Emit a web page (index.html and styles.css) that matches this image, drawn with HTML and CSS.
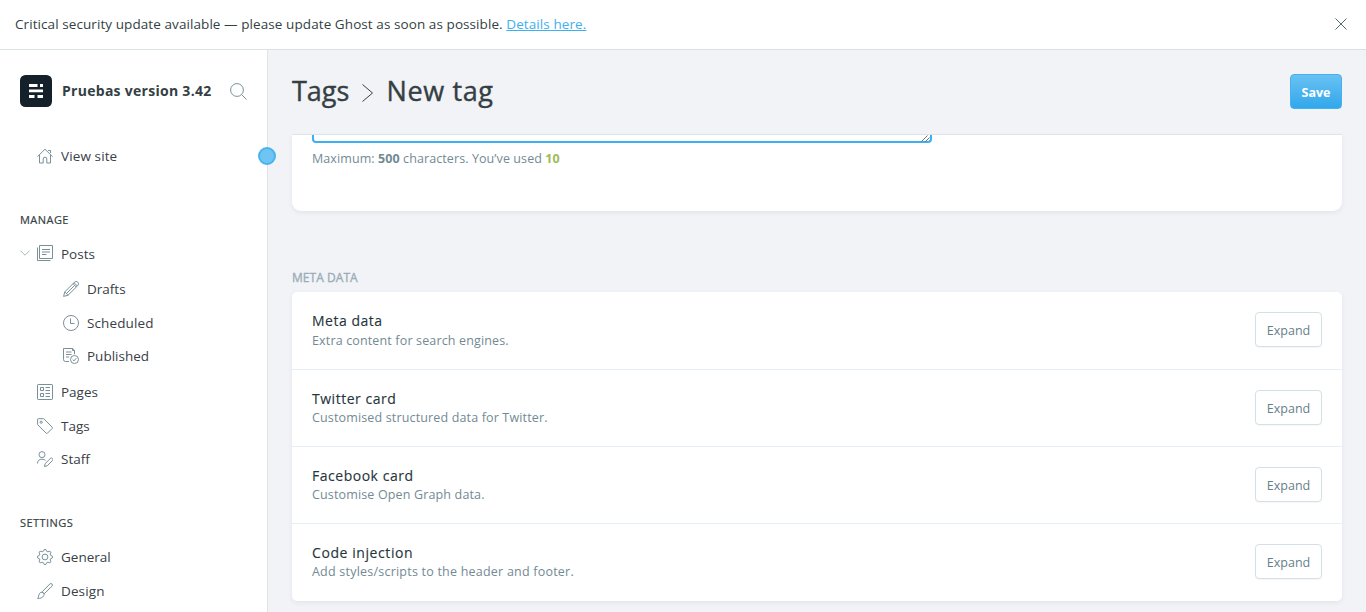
FILE: index.html
```html
<!DOCTYPE html>
<html lang="en">
<head>
<meta charset="utf-8">
<title>New tag</title>
<link rel="stylesheet" href="styles.css">
</head>
<body>
<div class="alert">
  <p class="alert-text">Critical security update available — please update Ghost as soon as possible. <a href="#">Details here.</a></p>
  <svg class="close" viewBox="0 0 12 12"><path d="M.5.5l11 11M11.500.500l-11 11"/></svg>
</div>
<div class="app">
  <nav class="sidebar">
    <div class="site">
      <svg class="logo" viewBox="0 0 32 32"><rect width="32" height="32" rx="5.500" fill="#15212a"/><path fill="#fff" d="M9 9h8.500v3H9zM20 9h3v3h-3zM9 14.500h14v2.800H9zM9 20h5.500v3H9zM17.500 20H23v3h-5.500z"/></svg>
      <span class="site-name">Pruebas version 3.42</span>
      <svg class="icon search" viewBox="0 0 17 17"><circle cx="7" cy="7" r="6.400"/><path d="M11.600 11.600l4.900 4.900"/></svg>
    </div>
    <a class="item view"><svg class="icon" viewBox="0 0 16 16"><path d="M.5 8.600L8 1.200l7.500 7.400M2.500 7v8h3.700v-4a1.800 1.800 0 0 1 3.600 0v4h3.700V7M11.200 2.500h2.300v2.600"/></svg><span class="wide">View site</span></a>
    <h2 class="head manage">Manage</h2>
    <a class="item posts"><svg class="chev" viewBox="0 0 10 6"><path d="M.5.700L5 5.200 9.500.700"/></svg><svg class="icon" viewBox="0 0 16 16"><path d="M2.500.500h13v13h-13zM.5 2.500v13h13M5 4.500h8M5 7h8M5 9.500h4.500"/></svg><span>Posts</span></a>
    <a class="item sub"><svg class="icon" viewBox="0 0 16 16"><path d="M.6 15.400l1.200-4.500L11.500 1.200a2.100 2.100 0 0 1 3.300 3.300L5.100 14.200zM1.800 10.900l3.300 3.300M10 2.700L13.300 6M11 1.700L14.300 5M3.600 12.400l8-8"/></svg><span>Drafts</span></a>
    <a class="item sub short"><svg class="icon" viewBox="0 0 16 16"><circle cx="8" cy="8" r="7.500"/><path d="M7.500 3.500v5h4"/></svg><span class="wide">Scheduled</span></a>
    <a class="item sub"><svg class="icon" viewBox="0 0 16 16"><path d="M6 13.500H2.500a2 2 0 0 1-2-2V.500h9.200l1.800 1.800v4M9.500.500v2h2M3 4h5.500M3 6.500h5.500M3 9h3"/><circle cx="11.500" cy="11.500" r="4"/><path d="M9.700 11.600l1.300 1.300 2.300-2.700"/></svg><span>Published</span></a>
    <a class="item pages"><svg class="icon" viewBox="0 0 16 16"><rect x=".5" y=".5" width="15" height="15" rx=".7"/><path d="M3.500 3.500h3v3h-3zM3.500 9.500h3v3h-3zM8.500 3.500H13M8.500 6.500H13M8.500 9.500H13M8.500 12.500H13"/></svg><span>Pages</span></a>
    <a class="item short"><svg class="icon" viewBox="0 0 16 16"><path d="M.6 1.400V6.700L9.300 15.300a.8.8 0 0 0 1 0l5-5a.8.8 0 0 0 0-1L6.700.700H1.300a.7.700 0 0 0-.7.700z"/><circle cx="4.200" cy="4.200" r="1.100"/></svg><span>Tags</span></a>
    <a class="item"><svg class="icon" viewBox="0 0 16 16"><circle cx="5" cy="3.600" r="3"/><path d="M.5 12.500C.5 9.500 2.400 8.200 5 8.200c1.500 0 2.600.4 3.400 1.200M7.500 15.500l.6-2.800 5.200-5.200a1.400 1.400 0 0 1 2.100 2.100L10.200 14.800z"/></svg><span>Staff</span></a>
    <h2 class="head settings">Settings</h2>
    <a class="item"><svg class="icon" viewBox="0 0 16 16"><circle cx="8" cy="8" r="2.900"/><path d="M6.400 2.300L7.200.500h1.600l.8 1.800 1.300.5 1.900-.7 1.100 1.100-.7 1.900.5 1.300 1.800.8v1.600l-1.800.8-.5 1.300.7 1.900-1.100 1.100-1.900-.7-1.300.5-.8 1.800H7.200l-.8-1.800-1.300-.5-1.900.7-1.100-1.100.7-1.900-.5-1.300L.5 8.800V7.200l1.800-.8.500-1.300-.7-1.900 1.100-1.100 1.900.7z" stroke-linejoin="round"/></svg><span>General</span></a>
    <a class="item"><svg class="icon" viewBox="0 0 16 16"><path d="M5.200 8.800L12.800 1a1.500 1.500 0 0 1 2.200 2.200l-7.800 7.600M5.200 8.800l2 2M4.900 9.300c1.700.2 2.600 1.600 1.900 3.200-.9 2.200-3.800 3.200-6.200 2.900 1-1 .8-1.900 1.300-3.500.5-1.700 1.500-2.700 3-2.600z"/></svg><span class="wide">Design</span></a>
    <span class="handle"></span>
  </nav>
  <main class="main">
    <header class="header">
      <h1 class="title"><span>Tags</span><svg class="sep" viewBox="0 0 11 18"><path d="M.5.500L10.500 9 .5 17.500"/></svg><span class="current">New tag</span></h1>
      <button class="save">Save</button>
    </header>
    <section class="card first">
      <div class="textarea"><svg viewBox="0 0 9 7"><path d="M.5 6.500l6-6M4.500 6.500l4-4"/></svg></div>
      <p class="desc count">Maximum: <b>500</b> characters. You’ve used <b class="used">10</b></p>
    </section>
    <h4 class="label">Meta data</h4>
    <section class="card list">
      <div class="row row1"><div><h3>Meta data</h3><p class="desc">Extra content for search engines.</p></div><button class="expand">Expand</button></div>
      <div class="row"><div><h3>Twitter card</h3><p class="desc">Customised structured data for Twitter.</p></div><button class="expand">Expand</button></div>
      <div class="row"><div><h3>Facebook card</h3><p class="desc">Customise Open Graph data.</p></div><button class="expand">Expand</button></div>
      <div class="row"><div><h3 class="loose">Code injection</h3><p class="desc loose">Add styles/scripts to the header and footer.</p></div><button class="expand">Expand</button></div>
    </section>
  </main>
</div>
</body>
</html>
```
FILE: styles.css
```css
* { box-sizing: border-box; margin: 0; padding: 0; }
body { width: 1366px; height: 612px; overflow: hidden; background: #fff; color: #343f44; font-family: "Open Sans", "Noto Sans", sans-serif; font-size: 13.5px; }
svg { display: block; fill: none; flex: none; }
.alert { height: 50px; border-bottom: 1px solid #dae1e3; display: flex; align-items: center; justify-content: space-between; padding: 0 19px 1px 15px; }
.alert-text { font-size: 13.5px; line-height: 20px; letter-spacing: .08px; white-space: nowrap; }
.alert a { color: #3eb0ef; text-decoration: underline; }
.close { width: 12px; height: 12px; stroke: #54666d; }
.app { display: flex; height: 562px; }
.sidebar { position: relative; width: 268px; flex: none; border-right: 1px solid #dfe5ea; padding-top: 25px; }
.site { display: flex; align-items: center; height: 32px; padding-left: 20px; }
.logo { width: 32px; height: 32px; }
.site-name { width: 178px; flex: none; padding: 0 0 2px 10px; font-size: 14px; font-weight: 700; letter-spacing: .28px; white-space: nowrap; }
.icon { width: 16px; height: 16px; stroke: #738a94; stroke-width: .95; }
.search { width: 17px; height: 17px; }
.item { display: flex; align-items: center; height: 34px; padding-left: 37px; gap: 8px; font-size: 13.5px; color: #394047; }
.wide { letter-spacing: .12px; }
.view { margin-top: 32px; }
.head { height: 17px; line-height: 17px; padding-left: 20px; font-size: 11px; font-weight: 500; text-transform: uppercase; letter-spacing: .45px; -webkit-text-stroke: .2px; }
.manage { margin: 38px 0 8px; }
.posts { padding-left: 20px; height: 34px; margin-bottom: 2px; }
.posts span { padding-top: 2px; }
.chev { width: 10px; height: 6px; stroke: #a7b6be; margin-right: -1px; }
.sub { padding-left: 63px; }
.short { height: 33px; }
.pages { margin-top: 2px; }
.settings { margin: 38px 0 9px; }
.handle { position: absolute; left: 258px; top: 97px; width: 18px; height: 18px; border-radius: 50%; background: #70c4f3; border: 2px solid #48b3ef; z-index: 2; }
.main { width: 1098px; background: #f2f3f7; padding: 0 24px; }
.header { height: 85px; border-bottom: 1px solid #dce7ee; display: flex; align-items: center; justify-content: space-between; padding-bottom: 2px; }
.title { display: flex; align-items: center; font-size: 27px; line-height: 36px; font-weight: 500; height: 36px; -webkit-text-stroke: .4px; }
.title span { padding-bottom: 1px; }
.current { letter-spacing: .65px; }
.sep { width: 11px; height: 18px; stroke: #343f44; margin: 3px 13px 0 13px; }
.save { width: 52px; height: 35px; border: 1px solid #45b2ef; border-radius: 4px; color: #fff; background: linear-gradient(#69c2f3, #31a7eb); font: 700 12.5px "Open Sans", sans-serif; padding-top: 2px; }
.card { background: #fff; box-shadow: 0 2px 5px rgba(40, 60, 80, .07); }
.first { height: 76px; border-radius: 0 0 9px 9px; padding-left: 20px; }
.textarea { width: 620px; height: 8px; border: 2px solid #3eb0ef; border-top: 0; border-radius: 0 0 4px 4px; display: flex; justify-content: flex-end; }
.textarea svg { width: 9px; height: 7px; stroke: #4f5659; stroke-width: .8; }
.desc { font-size: 12.5px; line-height: 18px; color: #738a94; letter-spacing: .15px; white-space: nowrap; }
.count { padding-top: 7px; letter-spacing: .09px; }
.used { color: #9fbb58; }
.label { margin-top: 57px; height: 24px; line-height: 20px; font-size: 12px; font-weight: 500; text-transform: uppercase; color: #9baeb8; letter-spacing: .05px; -webkit-text-stroke: .35px; }
.list { border-radius: 5px; height: 309px; }
.row { height: 77px; display: flex; justify-content: space-between; padding: 19px 20px 0; border-bottom: 1px solid #e5eff5; }
.row1 { height: 78px; }
.row1 .desc { padding-top: 1px; }
.row:last-child { border-bottom: 0; }
.row h3 { font-size: 14px; line-height: 20px; font-weight: 500; color: #26343b; letter-spacing: .52px; -webkit-text-stroke: .12px; }
.row h3.loose { letter-spacing: .58px; }
.desc.loose { letter-spacing: .22px; }
.expand { margin-top: 1px; width: 67px; height: 35px; background: #fff; border: 1px solid #d5e0e6; border-radius: 4px; color: #667f89; font: 400 12.5px "Open Sans", sans-serif; padding-top: 2px; box-shadow: 0 1px 1px rgba(40, 60, 80, .04); }
```
